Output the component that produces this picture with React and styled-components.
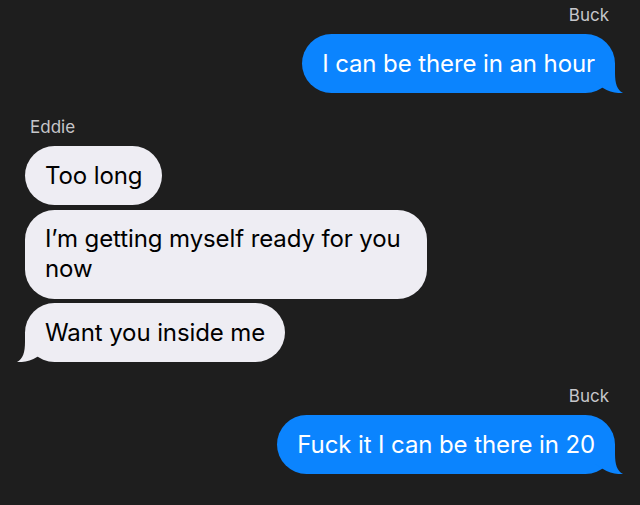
import React from "react";
import styled, { createGlobalStyle } from "styled-components";

const GlobalStyle = createGlobalStyle`
  html, body {
    margin: 0;
    padding: 0;
    background-color: #1e1e1e;
  }
  body {
    font-family: "Inter", "Noto Sans", "Liberation Sans", sans-serif;
    -webkit-font-smoothing: antialiased;
  }
`;

const Thread = styled.main`
  width: 640px;
  height: 505px;
  box-sizing: border-box;
  padding: 5px 25px 0 25px;
  display: flex;
  flex-direction: column;
  gap: 24px;
  background-color: #1e1e1e;
  overflow: hidden;
`;

const Group = styled.section`
  display: flex;
  flex-direction: column;
  align-items: ${({ mine }) => (mine ? "flex-end" : "flex-start")};
`;

const Sender = styled.div`
  font-size: 17px;
  line-height: 20px;
  color: #c6c6ca;
  padding: 0 6px 0 5px;
  margin-bottom: 9px;
`;

const Stack = styled.div`
  display: flex;
  flex-direction: column;
  align-items: inherit;
  gap: 4.5px;
`;

const Bubble = styled.div`
  position: relative;
  max-width: 362px;
  padding: 14.5px 20px;
  border-radius: 29.5px;
  font-size: 24px;
  line-height: 30px;
  letter-spacing: -0.1px;
  color: ${({ mine }) => (mine ? "#ffffff" : "#000000")};
  background-color: ${({ mine }) => (mine ? "#0b84fe" : "#eeedf3")};
`;

const Tail = styled.svg`
  position: absolute;
  bottom: 0;
  width: 28px;
  height: 30px;
  ${({ mine }) => (mine ? "right: -8px;" : "left: -8px; transform: scaleX(-1);")}
`;

const BubbleTail = ({ mine }) => (
  <Tail mine={mine} viewBox="0 0 28 30">
    <path
      d="M0 0 H20 V10 C20 20 22 27 28 30 C22 30.5 14 29 8 25 L0 20 Z"
      fill={mine ? "#0b84fe" : "#eeedf3"}
    />
  </Tail>
);

const thread = [
  { from: "Buck", mine: true, messages: ["I can be there in an hour"] },
  {
    from: "Eddie",
    mine: false,
    messages: ["Too long", "I’m getting myself ready for you now", "Want you inside me"],
  },
  { from: "Buck", mine: true, messages: ["Fuck it I can be there in 20"] },
];

const App = () => {
  return (
    <>
      <GlobalStyle />
      <Thread>
        {thread.map((group, i) => (
          <Group key={i} mine={group.mine}>
            <Sender>{group.from}</Sender>
            <Stack>
              {group.messages.map((text, j) => (
                <Bubble key={j} mine={group.mine}>
                  {text}
                  {j === group.messages.length - 1 && <BubbleTail mine={group.mine} />}
                </Bubble>
              ))}
            </Stack>
          </Group>
        ))}
      </Thread>
    </>
  );
};

export default App;
